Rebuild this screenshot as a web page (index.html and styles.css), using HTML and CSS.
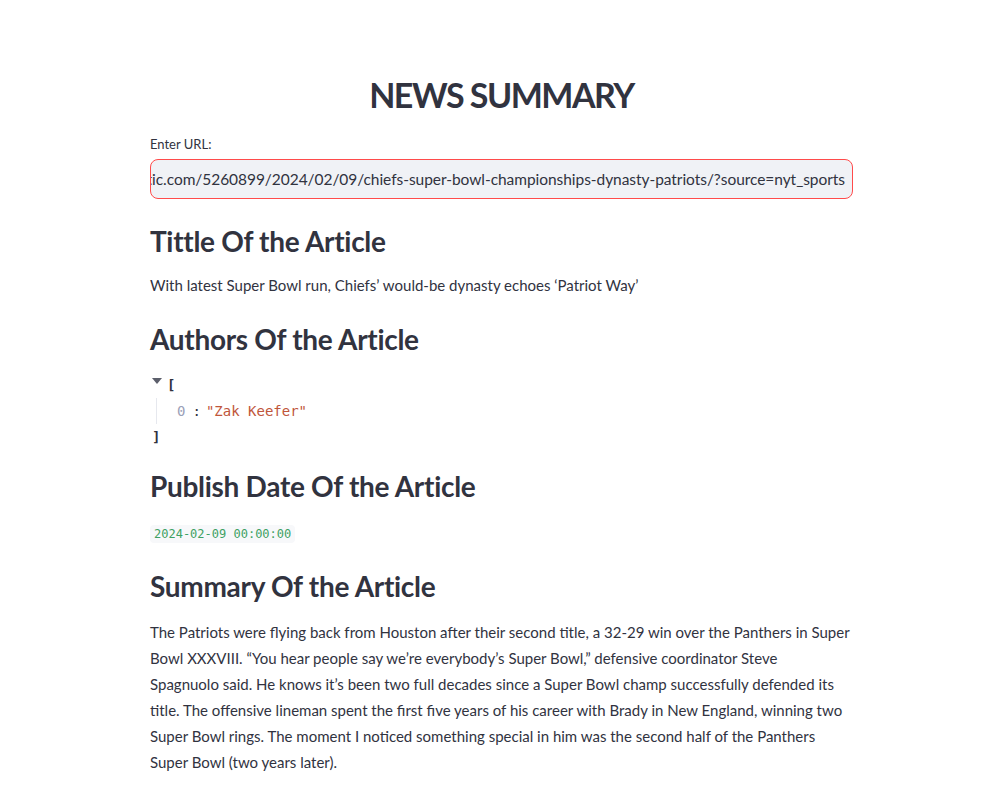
FILE: index.html
```html
<!DOCTYPE html>
<html lang="en">
<head>
<meta charset="utf-8">
<title>News Summary</title>
<link rel="stylesheet" href="styles.css">
</head>
<body>
<main class="app">
  <h1 class="title">NEWS SUMMARY</h1>
  <div class="field">
    <label class="field-label">Enter URL:</label>
    <div class="input">
      <span class="input-text">https://theathletic.com/5260899/2024/02/09/chiefs-super-bowl-championships-dynasty-patriots/?source=nyt_sports</span>
    </div>
  </div>
  <h2 class="header h-title">Tittle Of the Article</h2>
  <p class="text">With latest Super Bowl run, Chiefs’ would-be dynasty echoes ‘Patriot Way’</p>
  <h2 class="header h-authors">Authors Of the Article</h2>
  <div class="json">
    <div class="json-row"><span class="caret"></span><span class="bracket">[</span></div>
    <div class="json-body">
      <div class="json-item"><span class="json-key">0</span><span class="json-colon">:</span><span class="json-str">"Zak Keefer"</span></div>
    </div>
    <div class="json-row"><span class="bracket">]</span></div>
  </div>
  <h2 class="header h-date">Publish Date Of the Article</h2>
  <div class="codeline"><code class="code">2024-02-09 00:00:00</code></div>
  <h2 class="header h-summary">Summary Of the Article</h2>
  <p class="text summary">The Patriots were flying back from Houston after their second title, a 32-29 win over the Panthers in Super<br>Bowl XXXVIII. “You hear people say we’re everybody’s Super Bowl,” defensive coordinator Steve<br>Spagnuolo said. He knows it’s been two full decades since a Super Bowl champ successfully defended its<br>title. The offensive lineman spent the first five years of his career with Brady in New England, winning two<br>Super Bowl rings. The moment I noticed something special in him was the second half of the Panthers<br>Super Bowl (two years later).</p>
</main>
</body>
</html>
```
FILE: styles.css
```css
* { box-sizing: border-box; }
html, body { margin: 0; padding: 0; background: #ffffff; }
body {
  font-family: Lato, "Open Sans", "Liberation Sans", sans-serif;
  color: #31333f;
}
.app {
  width: 703px;
  margin: 0 auto;
  padding-top: 72px;
  display: flex;
  flex-direction: column;
}
.title {
  margin: 0;
  text-align: center;
  font-size: 34px;
  font-weight: 700;
  line-height: 46px;
  letter-spacing: -1.5px;
}
.field { margin-top: 17px; display: flex; flex-direction: column; }
.field-label {
  font-size: 13px;
  line-height: 18px;
  margin-bottom: 6px;
}
.input {
  height: 40px;
  border: 1px solid #ff4b4b;
  border-radius: 8px;
  background: #f0f2f6;
  display: flex;
  justify-content: flex-end;
  align-items: center;
  padding: 0 7px 0 7px;
  overflow: hidden;
  white-space: nowrap;
}
.input-text {
  font-size: 15.5px;
  letter-spacing: -0.05px;
  flex-shrink: 0;
  color: #31333f;
}
.header {
  margin: 0;
  font-size: 28px;
  font-weight: 700;
  line-height: 36px;
  letter-spacing: -0.3px;
}
.h-title { margin-top: 24px; }
.h-authors { margin-top: 23px; }
.h-date { margin-top: 18px; }
.h-summary { margin-top: 25px; }
.text {
  margin: 13px 0 0;
  font-size: 15px;
  line-height: 26px;
}
.summary { margin-top: 15px; }
.json {
  margin-top: 15px;
  font-family: "DejaVu Sans Mono", "Liberation Mono", monospace;
  font-size: 14px;
  line-height: 26px;
}
.json-row { display: flex; align-items: center; height: 26px; }
.caret {
  width: 0; height: 0;
  border-left: 5px solid transparent;
  border-right: 5px solid transparent;
  border-top: 6px solid #5c5f6b;
  margin: -8px 5px 0 2px;
}
.bracket { color: #31333f; font-weight: 700; }
.json-row:last-child .bracket { margin-left: 2px; }
.json-body {
  margin-left: 6px;
  border-left: 1px solid #e6e8ee;
  padding-left: 20px;
}
.json-item { height: 26px; display: flex; align-items: center; }
.json-key { color: #9aa0b8; }
.json-colon { margin: 0 5px 0 7px; color: #31333f; }
.json-str { color: #c0563b; }
.codeline { margin-top: 18px; }
.code {
  display: inline-block;
  font-family: "DejaVu Sans Mono", "Liberation Mono", monospace;
  font-size: 12px;
  line-height: 18px;
  padding: 0 4px;
  background: #f7f8fa;
  color: #3ea163;
  border-radius: 4px;
}
```
